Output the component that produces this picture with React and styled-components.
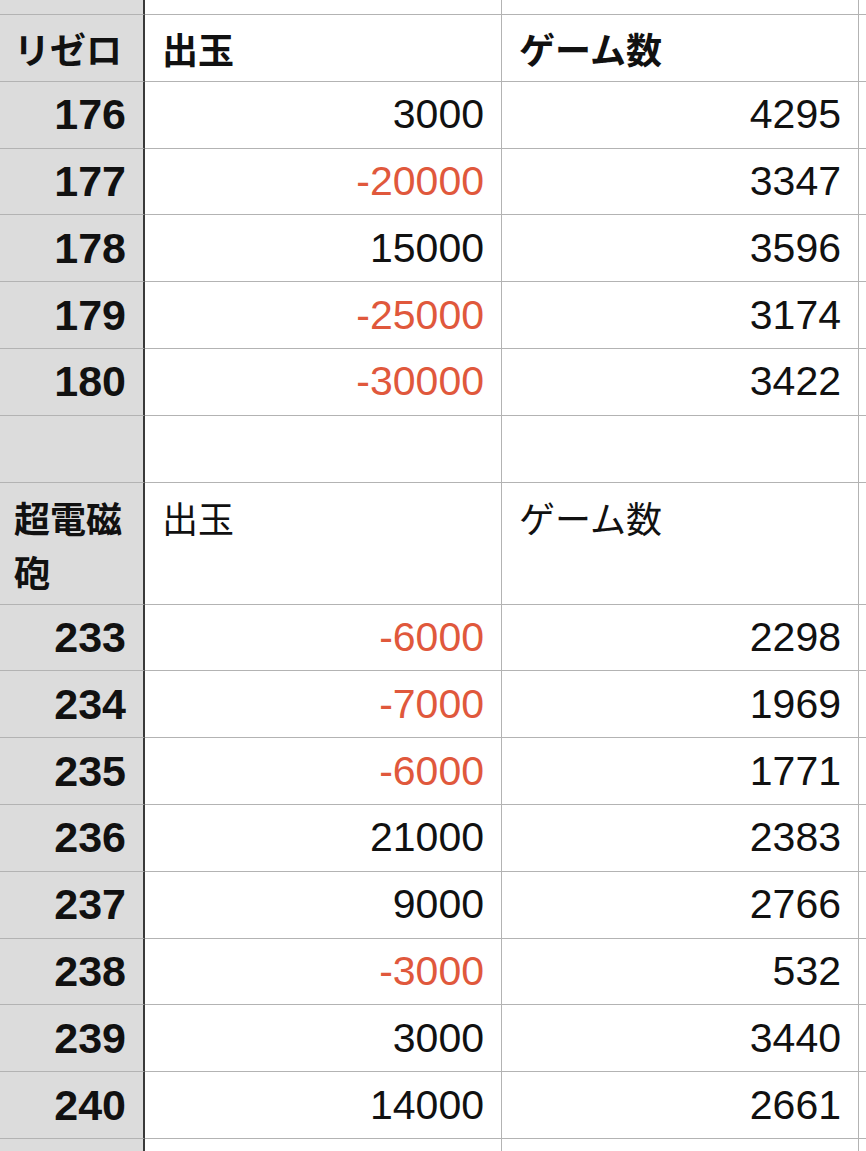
import React from "react";
import styled, { createGlobalStyle } from "styled-components";

const GlobalStyle = createGlobalStyle`
  html, body {
    margin: 0;
    padding: 0;
    background: #ffffff;
  }
  body {
    font-family: "Liberation Sans", "Noto Sans CJK JP", sans-serif;
    color: #111111;
  }
`;

const Sheet = styled.div`
  width: 866px;
  height: 1151px;
  overflow: hidden;
`;

const Row = styled.div`
  display: grid;
  grid-template-columns: 145px 357px 357px 1fr;
  height: ${(p) => p.$h}px;
`;

const Cell = styled.div`
  box-sizing: border-box;
  display: flex;
  align-items: ${(p) => (p.$top ? "flex-start" : "center")};
  justify-content: ${(p) => (p.$right ? "flex-end" : "flex-start")};
  padding: ${(p) => (p.$top ? "7px" : "0")} 17px 0 17px;
  border-right: 1px solid #b3b3b3;
  border-bottom: 1px solid #b3b3b3;
  background: #ffffff;
  font-size: 41px;
  line-height: ${(p) => (p.$top ? "54px" : "normal")};
  font-weight: ${(p) => (p.$bold ? 700 : 400)};
  color: ${(p) => (p.$neg ? "#e0583c" : "#111111")};
  white-space: ${(p) => (p.$wrap ? "normal" : "nowrap")};
  overflow: hidden;
`;

const HeadCell = styled(Cell)`
  background: #dcdcdc;
  border-right: 2px solid #3a3a3a;
  font-weight: 700;
  font-size: 43px;
  padding-left: 14px;
`;

const Jp = styled.span`
  font-family: "Noto Sans CJK JP", sans-serif;
  font-size: 36px;
  letter-spacing: 0;
`;

const ROW_H = 66.8;

const rezero = [
  [176, 3000, 4295],
  [177, -20000, 3347],
  [178, 15000, 3596],
  [179, -25000, 3174],
  [180, -30000, 3422],
];

const railgun = [
  [233, -6000, 2298],
  [234, -7000, 1969],
  [235, -6000, 1771],
  [236, 21000, 2383],
  [237, 9000, 2766],
  [238, -3000, 532],
  [239, 3000, 3440],
  [240, 14000, 2661],
];

const BlankRow = ({ h }) => (
  <Row $h={h}>
    <HeadCell />
    <Cell />
    <Cell />
    <Cell />
  </Row>
);

const DataRow = ({ no, out, games }) => (
  <Row $h={ROW_H}>
    <HeadCell $right>{no}</HeadCell>
    <Cell $right $neg={out < 0}>
      {out}
    </Cell>
    <Cell $right>{games}</Cell>
    <Cell />
  </Row>
);

const App = () => (
  <>
    <GlobalStyle />
    <Sheet>
      <BlankRow h={15} />

      <Row $h={ROW_H}>
        <HeadCell>
          <Jp>リゼロ</Jp>
        </HeadCell>
        <Cell $bold>
          <Jp>出玉</Jp>
        </Cell>
        <Cell $bold>
          <Jp>ゲーム数</Jp>
        </Cell>
        <Cell />
      </Row>
      {rezero.map(([no, out, games]) => (
        <DataRow key={no} no={no} out={out} games={games} />
      ))}

      <BlankRow h={ROW_H} />

      <Row $h={122}>
        <HeadCell $top $wrap>
          <Jp>超電磁砲</Jp>
        </HeadCell>
        <Cell $top>
          <Jp>出玉</Jp>
        </Cell>
        <Cell $top>
          <Jp>ゲーム数</Jp>
        </Cell>
        <Cell />
      </Row>
      {railgun.map(([no, out, games]) => (
        <DataRow key={no} no={no} out={out} games={games} />
      ))}

      <BlankRow h={ROW_H} />
    </Sheet>
  </>
);

export default App;
